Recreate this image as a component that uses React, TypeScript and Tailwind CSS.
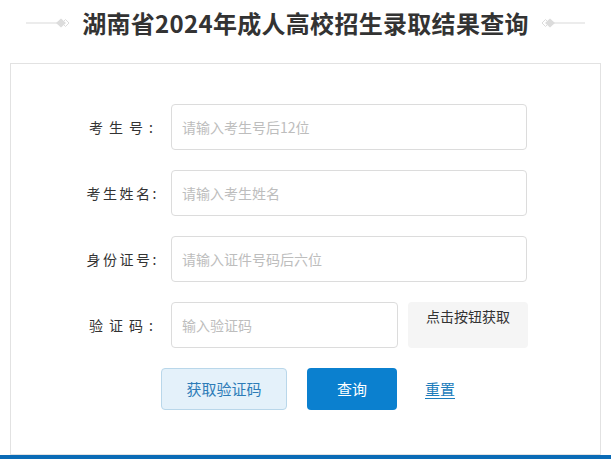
import React from 'react';

const fontStack = { fontFamily: '"Noto Sans CJK SC", "Noto Sans", sans-serif' };

const Deco: React.FC<{ flip?: boolean }> = ({ flip }) => (
  <svg width="44" height="12" viewBox="0 0 44 12" className={flip ? 'scale-x-[-1]' : ''}>
    <line x1="0" y1="6" x2="32" y2="6" stroke="#d9d9d9" strokeWidth="1" />
    <path d="M30 6 L35 1.5 L40 6 L35 10.5 Z" fill="#dcdcdc" />
    <path d="M36 6 L39.5 2.5 L43 6 L39.5 9.5 Z" fill="none" stroke="#dcdcdc" strokeWidth="1" />
  </svg>
);

const Row: React.FC<{ label: React.ReactNode; placeholder: string; children?: React.ReactNode; narrow?: boolean }> = ({
  label,
  placeholder,
  children,
  narrow,
}) => (
  <div className="flex items-center">
    <div className="w-[160px] pr-[12px] text-right text-[14px] text-[#333]">{label}</div>
    <input
      className={`h-[46px] rounded-[4px] border border-[#dcdcdc] px-[10px] text-[14px] text-[#333] placeholder:text-[#bdbdbd] outline-none ${
        narrow ? 'w-[227px]' : 'w-[356px]'
      }`}
      placeholder={placeholder}
    />
    {children}
  </div>
);

const App: React.FC = () => {
  return (
    <div className="w-[611px] h-[459px] bg-white overflow-hidden flex flex-col" style={fontStack}>
      <div className="h-[50px] pb-[4px] flex items-center justify-center gap-[12px]">
        <Deco />
        <h1 className="text-[24px] font-bold text-[#333] tracking-[0.3px]">湖南省2024年成人高校招生录取结果查询</h1>
        <Deco flip />
      </div>
      <div className="mt-[13px] mx-[10px] flex-1 border border-[#e2e2e2] pt-[40px] flex flex-col gap-[20px]">
        <Row label={<span className="tracking-[6px]">考生号:</span>} placeholder="请输入考生号后12位" />
        <Row label={<span className="tracking-[2.5px]">考生姓名:</span>} placeholder="请输入考生姓名" />
        <Row label={<span className="tracking-[2.5px]">身份证号:</span>} placeholder="请输入证件号码后六位" />
        <Row label={<span className="tracking-[6px]">验证码:</span>} placeholder="输入验证码" narrow>
          <div className="ml-[10px] w-[120px] h-[46px] rounded-[4px] bg-[#f5f5f5] text-[14px] text-[#333] text-center pt-[4px]">
            点击按钮获取
          </div>
        </Row>
        <div className="flex items-center pl-[150px]">
          <button className="w-[126px] h-[42px] rounded-[4px] border border-[#b9d7ea] bg-[#e4f1fa] text-[15px] text-[#2d7cb8]">
            获取验证码
          </button>
          <button className="ml-[20px] w-[90px] h-[42px] rounded-[4px] bg-[#0b80cf] text-[15px] text-white">查询</button>
          <a className="ml-[28px] text-[15px] text-[#1b7cbb] underline underline-offset-[3px]">重置</a>
        </div>
      </div>
      <div className="h-[4px] bg-[#0a6bb6]" />
    </div>
  );
};

export default App;
